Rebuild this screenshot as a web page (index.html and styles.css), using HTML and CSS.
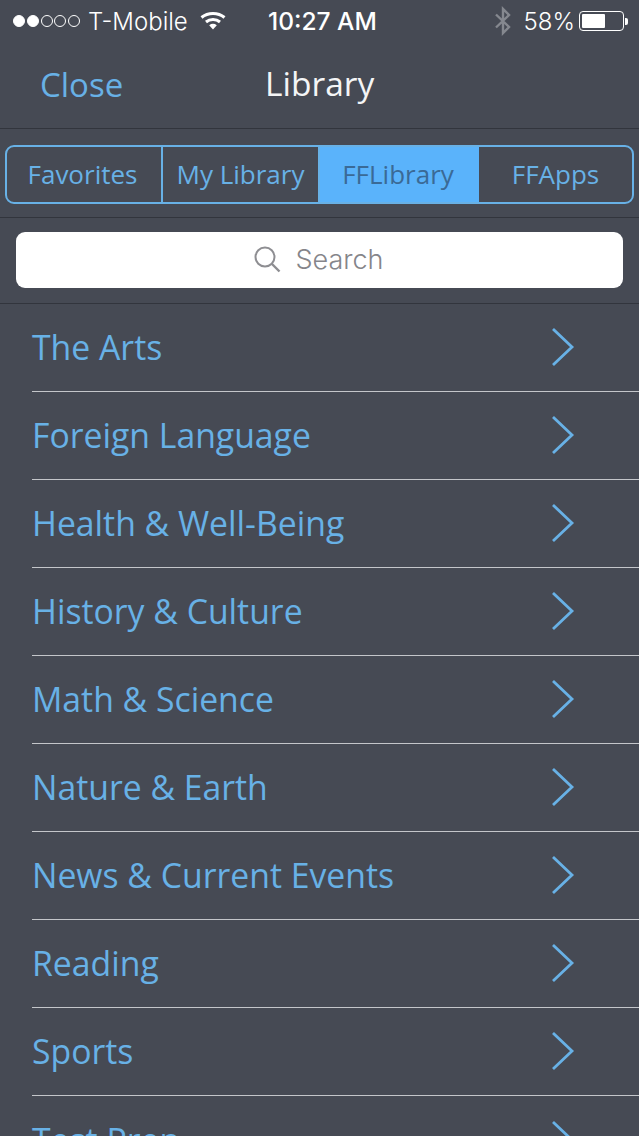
FILE: index.html
```html
<!DOCTYPE html>
<html lang="en">

<head>
    <meta charset="UTF-8">
    <meta name="viewport" content="width=device-width, initial-scale=1.0">
    <title>Library</title>
    <link rel="stylesheet" href="styles.css">
</head>

<body>

    <div class="status-bar">
        <div class="status-left">
            <span class="signal">
                <i class="dot on"></i><i class="dot on"></i><i class="dot"></i><i class="dot"></i><i class="dot"></i>
            </span>
            <span class="carrier">T-Mobile</span>
            <svg class="wifi" width="26" height="20" viewBox="0 0 26 20">
                <path d="M1.5 6.5C8 1 18 1 24.5 6.5" fill="none" stroke="#fff" stroke-width="3"/>
                <path d="M6 11C10 7.6 16 7.6 20 11" fill="none" stroke="#fff" stroke-width="3"/>
                <path d="M9.2 14.2L13 18.6L16.8 14.2C14.5 12.4 11.500 12.400 9.200 14.200Z" fill="#fff"/>
            </svg>
        </div>
        <div class="status-time">10:27 AM</div>
        <div class="status-right">
            <svg class="bluetooth" width="18" height="30" viewBox="0 0 18 30">
                <path d="M2 8.500L15 21L9 27V3L15 9L2 21.500" fill="none" stroke="#85888f" stroke-width="2.400"/>
            </svg>
            <span class="battery-text">58%</span>
            <span class="battery"><span class="battery-level" style="width: 58%"></span></span>
            <span class="battery-tip"></span>
        </div>
    </div>

    <header class="nav-bar">
        <a class="close-link">Close</a>
        <h1 class="nav-title">Library</h1>
    </header>

    <div class="tabs-row">
        <div class="tabs">
            <div class="tab tab-favorites">Favorites</div>
            <div class="tab tab-my">My Library</div>
            <div class="tab tab-ff active">FFLibrary</div>
            <div class="tab tab-apps">FFApps</div>
        </div>
    </div>

    <div class="search-row">
        <div class="search-box">
            <svg width="28" height="28" viewBox="0 0 28 28">
                <circle cx="12" cy="12" r="9.500" fill="none" stroke="#8e8e92" stroke-width="2"/>
                <path d="M19 19L26.500 26.500" stroke="#8e8e92" stroke-width="2.400"/>
            </svg>
            <span>Search</span>
        </div>
    </div>

    <ul class="category-list">
        <li class="category"><span>The Arts</span><svg class="chevron" width="24" height="40" viewBox="0 0 24 40"><path d="M2 2L21 20L2 38"/></svg></li>
        <li class="category"><span>Foreign Language</span><svg class="chevron" width="24" height="40" viewBox="0 0 24 40"><path d="M2 2L21 20L2 38"/></svg></li>
        <li class="category"><span>Health &amp; Well-Being</span><svg class="chevron" width="24" height="40" viewBox="0 0 24 40"><path d="M2 2L21 20L2 38"/></svg></li>
        <li class="category"><span>History &amp; Culture</span><svg class="chevron" width="24" height="40" viewBox="0 0 24 40"><path d="M2 2L21 20L2 38"/></svg></li>
        <li class="category"><span>Math &amp; Science</span><svg class="chevron" width="24" height="40" viewBox="0 0 24 40"><path d="M2 2L21 20L2 38"/></svg></li>
        <li class="category"><span>Nature &amp; Earth</span><svg class="chevron" width="24" height="40" viewBox="0 0 24 40"><path d="M2 2L21 20L2 38"/></svg></li>
        <li class="category"><span>News &amp; Current Events</span><svg class="chevron" width="24" height="40" viewBox="0 0 24 40"><path d="M2 2L21 20L2 38"/></svg></li>
        <li class="category"><span>Reading</span><svg class="chevron" width="24" height="40" viewBox="0 0 24 40"><path d="M2 2L21 20L2 38"/></svg></li>
        <li class="category"><span>Sports</span><svg class="chevron" width="24" height="40" viewBox="0 0 24 40"><path d="M2 2L21 20L2 38"/></svg></li>
        <li class="category"><span>Test Prep</span><svg class="chevron" width="24" height="40" viewBox="0 0 24 40"><path d="M2 2L21 20L2 38"/></svg></li>
    </ul>

</body>

</html>
```

FILE: styles.css
```css
html,
body {
    height: 100%;
}

body {
    font-family: 'Open Sans', sans-serif;
    margin: 0;
    padding: 0;
    background-color: #464a54;
    overflow: hidden;
}

.status-bar {
    height: 42px;
    display: flex;
    align-items: center;
    justify-content: space-between;
    position: relative;
    padding: 0 11px 0 13px;
    color: #fff;
    font-family: 'Inter', sans-serif;
    font-size: 24px;
}

.status-left,
.status-right {
    display: flex;
    align-items: center;
}

.signal {
    display: flex;
    gap: 1.750px;
    margin-right: 8px;
}

.dot {
    width: 12px;
    height: 12px;
    border: 1px solid #fff;
    border-radius: 50%;
    box-sizing: border-box;
}

.dot.on {
    background-color: #fff;
}

.carrier {
    font-weight: 300;
}

.wifi {
    margin-left: 12px;
}

.status-time {
    position: absolute;
    left: 268px;
    top: 6px;
    font-size: 24.500px;
    font-weight: 500;
}

.bluetooth {
    margin-right: 12px;
}

.battery-text {
    font-weight: 300;
    margin-right: 4px;
}

.battery {
    display: block;
    width: 45px;
    height: 20px;
    box-sizing: border-box;
    border: 1px solid #fff;
    border-radius: 4px;
    padding: 2px;
}

.battery-level {
    display: block;
    height: 100%;
    background-color: #fff;
    border-radius: 1px;
}

.battery-tip {
    width: 3px;
    height: 7px;
    margin-left: 1px;
    background-color: #fff;
    border-radius: 0 2px 2px 0;
}

.nav-bar {
    height: 87px;
    box-sizing: border-box;
    border-bottom: 1px solid #32353d;
    display: flex;
    align-items: center;
    padding: 0 0 2px 40px;
}

.close-link {
    font-size: 33px;
    color: #68b1e6;
    width: 225px;
}

.nav-title {
    margin: 0 0 2px;
    font-size: 33.500px;
    font-weight: 400;
    color: #f4f5f6;
}

.tabs-row {
    height: 89px;
    box-sizing: border-box;
    padding: 16px 5px 0 5px;
    border-bottom: 1px solid #32353d;
}

.tabs {
    height: 59px;
    box-sizing: border-box;
    display: flex;
    border: 2px solid #68b1e6;
    border-radius: 9px;
    overflow: hidden;
}

.tab {
    display: flex;
    align-items: center;
    justify-content: center;
    box-sizing: border-box;
    font-size: 26px;
    color: #68b1e6;
    padding-bottom: 2px;
}

.tab-favorites {
    width: 156px;
    border-right: 2px solid #68b1e6;
    padding-right: 3px;
}

.tab-my {
    width: 157px;
    border-right: 2px solid #68b1e6;
}

.tab-ff {
    width: 159px;
    padding-right: 3px;
}

.tab-apps {
    flex: 1;
}

.tab.active {
    background-color: #5ab3fb;
    color: #3a6a96;
}

.search-row {
    height: 86px;
    box-sizing: border-box;
    padding: 14px 16px 0 16px;
    border-bottom: 1px solid #32353d;
}

.search-box {
    height: 56px;
    background-color: #fff;
    border-radius: 9px;
    display: flex;
    align-items: center;
    justify-content: center;
    gap: 14px;
    font-size: 27px;
    font-weight: 300;
    color: #85858a;
    padding: 0 2px 2px 0;
    box-sizing: border-box;
    font-family: 'Inter', sans-serif;
}

.category-list {
    list-style: none;
    margin: 0;
    padding: 0 0 0 32px;
}

.category {
    height: 88px;
    box-sizing: border-box;
    border-bottom: 1px solid #c4c6ca;
    display: flex;
    align-items: center;
    justify-content: space-between;
    padding: 0 64px 1px 0;
    font-size: 33.750px;
    color: #68b1e6;
}

.category:last-child {
    border-bottom: none;
}

.chevron path {
    fill: none;
    stroke: #68b1e6;
    stroke-width: 2.800;
}
```
